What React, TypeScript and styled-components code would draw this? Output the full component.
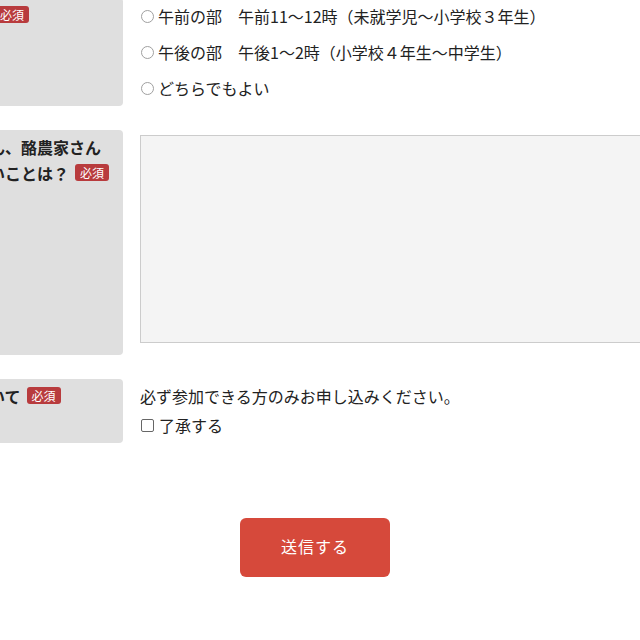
import React from "react";
import styled, { createGlobalStyle } from "styled-components";

const Global = createGlobalStyle`
  html, body { margin: 0; padding: 0; background: #fff; }
  body {
    font-family: "Noto Sans CJK JP", "Noto Sans", sans-serif;
    color: #222;
    font-size: 16px;
    overflow: hidden;
  }
`;

const Form = styled.form`
  width: 812px;
  margin: -2px 0 0 -91px;
  display: flex;
  flex-direction: column;
  gap: 24px;
`;

const Row = styled.div`
  display: grid;
  grid-template-columns: 214px 1fr;
  column-gap: 17px;
`;

const Label = styled.div`
  background: #dfdfdf;
  border-radius: 4px;
  padding: 5px 10px 5px 16px;
  font-weight: bold;
  font-size: 16px;
  line-height: 25.6px;
  color: #222;
`;

const LabelLine = styled.span`
  display: block;
  white-space: nowrap;
`;

const Badge = styled.span`
  display: inline-block;
  margin-left: 6px;
  padding: 0 5px;
  height: 17px;
  line-height: 17px;
  font-size: 12px;
  font-weight: normal;
  color: #fff;
  background: #b83b3d;
  border-radius: 3px;
  vertical-align: 2px;
`;

const Field = styled.div<{ $pad?: string }>`
  padding: ${(p) => p.$pad ?? "0"};
  font-size: 16px;
  color: #222;
`;

const Choice = styled.label`
  display: flex;
  align-items: center;
  height: 36px;
  line-height: 36px;
`;

const Radio = styled.input.attrs({ type: "radio" })`
  appearance: none;
  width: 13px;
  height: 13px;
  margin: 0 4px 0 1px;
  border: 1px solid #a0a0a0;
  border-radius: 50%;
  background: #fff;
  box-sizing: border-box;
`;

const Check = styled.input.attrs({ type: "checkbox" })`
  appearance: none;
  width: 13px;
  height: 13px;
  margin: 0 5px 0 1px;
  border: 1px solid #666;
  border-radius: 2px;
  background: #fff;
  box-sizing: border-box;
`;

const Line = styled.div`
  line-height: 29px;
  height: 29px;
  display: flex;
  align-items: center;
`;

const TextArea = styled.textarea`
  display: block;
  width: 580px;
  height: 208px;
  box-sizing: border-box;
  background: #f4f4f4;
  border: 1px solid #cccccc;
  resize: none;
  margin: 0;
`;

const Actions = styled.div`
  display: flex;
  justify-content: center;
  margin-top: 51px;
`;

const Submit = styled.button`
  width: 150px;
  height: 59px;
  padding: 0 0 3px;
  border: none;
  border-radius: 6px;
  background: #d6493b;
  color: #fff;
  font-family: "Noto Sans CJK JP", sans-serif;
  font-size: 16px;
  letter-spacing: 1px;
`;

export default function App() {
  return (
    <>
      <Global />
      <Form onSubmit={(e) => e.preventDefault()}>
        <Row>
          <Label>
            <LabelLine>
              希望時間<Badge>必須</Badge>
            </LabelLine>
          </Label>
          <Field>
            <Choice>
              <Radio name="time" />
              午前の部　午前11〜12時（未就学児〜小学校３年生）
            </Choice>
            <Choice>
              <Radio name="time" />
              午後の部　午後1〜2時（小学校４年生〜中学生）
            </Choice>
            <Choice>
              <Radio name="time" />
              どちらでもよい
            </Choice>
          </Field>
        </Row>
        <Row>
          <Label>
            <LabelLine>子牛ちゃん、酪農家さん</LabelLine>
            <LabelLine>
              に聞きたいことは？<Badge>必須</Badge>
            </LabelLine>
          </Label>
          <Field $pad="5px 0 12px">
            <TextArea />
          </Field>
        </Row>
        <Row>
          <Label>
            <LabelLine>
              参加について<Badge>必須</Badge>
            </LabelLine>
          </Label>
          <Field $pad="3px 0">
            <Line>必ず参加できる方のみお申し込みください。</Line>
            <Line>
              <Check />
              了承する
            </Line>
          </Field>
        </Row>
        <Actions>
          <Submit type="submit">送信する</Submit>
        </Actions>
      </Form>
    </>
  );
}
